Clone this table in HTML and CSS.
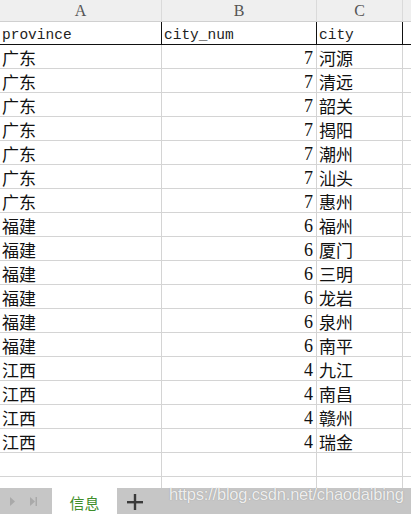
FILE: index.html
```html
<!DOCTYPE html>
<html>
<head>
<meta charset="utf-8">
<link rel="stylesheet" href="styles.css">
</head>
<body>
<div class="sheet">
  <div class="grid">
    <div class="row colhead">
      <div class="cell a">A</div><div class="cell b">B</div><div class="cell c">C</div><div class="cell d"></div>
    </div>
    <div class="row first">
      <div class="cell a mono">province</div><div class="cell b mono">city_num</div><div class="cell c mono">city</div><div class="cell d"></div>
    </div>
    <div class="row"><div class="cell a">广东</div><div class="cell b num">7</div><div class="cell c">河源</div><div class="cell d"></div></div>
    <div class="row"><div class="cell a">广东</div><div class="cell b num">7</div><div class="cell c">清远</div><div class="cell d"></div></div>
    <div class="row"><div class="cell a">广东</div><div class="cell b num">7</div><div class="cell c">韶关</div><div class="cell d"></div></div>
    <div class="row"><div class="cell a">广东</div><div class="cell b num">7</div><div class="cell c">揭阳</div><div class="cell d"></div></div>
    <div class="row"><div class="cell a">广东</div><div class="cell b num">7</div><div class="cell c">潮州</div><div class="cell d"></div></div>
    <div class="row"><div class="cell a">广东</div><div class="cell b num">7</div><div class="cell c">汕头</div><div class="cell d"></div></div>
    <div class="row"><div class="cell a">广东</div><div class="cell b num">7</div><div class="cell c">惠州</div><div class="cell d"></div></div>
    <div class="row"><div class="cell a">福建</div><div class="cell b num">6</div><div class="cell c">福州</div><div class="cell d"></div></div>
    <div class="row"><div class="cell a">福建</div><div class="cell b num">6</div><div class="cell c">厦门</div><div class="cell d"></div></div>
    <div class="row"><div class="cell a">福建</div><div class="cell b num">6</div><div class="cell c">三明</div><div class="cell d"></div></div>
    <div class="row"><div class="cell a">福建</div><div class="cell b num">6</div><div class="cell c">龙岩</div><div class="cell d"></div></div>
    <div class="row"><div class="cell a">福建</div><div class="cell b num">6</div><div class="cell c">泉州</div><div class="cell d"></div></div>
    <div class="row"><div class="cell a">福建</div><div class="cell b num">6</div><div class="cell c">南平</div><div class="cell d"></div></div>
    <div class="row"><div class="cell a">江西</div><div class="cell b num">4</div><div class="cell c">九江</div><div class="cell d"></div></div>
    <div class="row"><div class="cell a">江西</div><div class="cell b num">4</div><div class="cell c">南昌</div><div class="cell d"></div></div>
    <div class="row"><div class="cell a">江西</div><div class="cell b num">4</div><div class="cell c">赣州</div><div class="cell d"></div></div>
    <div class="row"><div class="cell a">江西</div><div class="cell b num">4</div><div class="cell c">瑞金</div><div class="cell d"></div></div>
    <div class="row"><div class="cell a"></div><div class="cell b"></div><div class="cell c"></div><div class="cell d"></div></div>
    <div class="row"><div class="cell a"></div><div class="cell b"></div><div class="cell c"></div><div class="cell d"></div></div>
  </div>
  <div class="tabbar">
    <div class="nav">
      <svg width="52" height="26" viewBox="0 0 52 26">
        <path d="M10 9 L15 13.5 L10 18 Z" fill="#a9a9a9"/>
        <path d="M30 9 L35 13.5 L30 18 Z" fill="#a9a9a9"/>
        <rect x="35.5" y="9" width="1.5" height="9" fill="#a9a9a9"/>
      </svg>
    </div>
    <div class="tab">信息</div>
    <div class="add">
      <svg width="16" height="16" viewBox="0 0 16 16">
        <rect x="0" y="7" width="16" height="2.4" fill="#3a3a3a"/>
        <rect x="6.8" y="0" width="2.4" height="16" fill="#3a3a3a"/>
      </svg>
    </div>
    <div class="watermark">https://blog.csdn.net/chaodaibing</div>
  </div>
</div>
</body>
</html>
```
FILE: styles.css
```css
* { box-sizing: border-box; }
html, body { margin: 0; padding: 0; background: #fff; }
.sheet {
  width: 411px;
  height: 514px;
  display: flex;
  flex-direction: column;
  overflow: hidden;
  font-family: "Noto Sans CJK SC", "Liberation Serif", serif;
}
.grid {
  flex: 1;
  overflow: hidden;
}
.row {
  display: flex;
  height: 24px;
  border-bottom: 1px solid #d4d4d4;
}
.cell {
  height: 100%;
  border-right: 1px solid #d4d4d4;
  font-size: 17px;
  line-height: 20px;
  padding: 3px 2px 0;
  color: #111;
  white-space: nowrap;
}
.a { width: 162px; }
.b { width: 155px; }
.c { width: 86px; }
.d { flex: 1; border-right: none; }
.colhead {
  height: 22px;
  background: #efefef;
  border-bottom: 1px solid #d0d0d0;
}
.colhead .cell {
  font-family: "Liberation Serif", serif;
  font-size: 16px;
  line-height: 21px;
  padding-top: 0;
  color: #555;
  text-align: center;
  border-right-color: #dadada;
}
.first {
  height: 23px;
  border-bottom: 1px solid #111;
}
.first .cell {
  border-right-color: #111;
  line-height: 18px;
  padding-top: 4px;
}
.first .d { border-right: none; }
.mono {
  font-family: "Liberation Mono", monospace;
  font-size: 14.5px;
  color: #222;
}
.num {
  text-align: right;
  font-family: "Liberation Serif", serif;
  font-size: 18px;
  padding-right: 3px;
}
.tabbar {
  position: relative;
  height: 26px;
  flex: none;
  display: flex;
  background: #c6c6c6;
}
.nav { width: 52px; height: 26px; }
.nav svg { display: block; }
.tab {
  width: 65px;
  background: #fff;
  color: #3e8e2a;
  font-size: 15px;
  line-height: 26px;
  padding-top: 2px;
  text-align: center;
}
.add {
  width: 36px;
  display: flex;
  align-items: center;
  justify-content: center;
  padding-top: 2px;
}
.watermark {
  position: absolute;
  left: 169px;
  top: -3px;
  font-family: "Liberation Sans", Arial, sans-serif;
  font-size: 16.5px;
  letter-spacing: -0.2px;
  color: rgba(250, 250, 250, 0.9);
  text-shadow: 0 0 1px rgba(120, 120, 120, 0.7);
}
```
